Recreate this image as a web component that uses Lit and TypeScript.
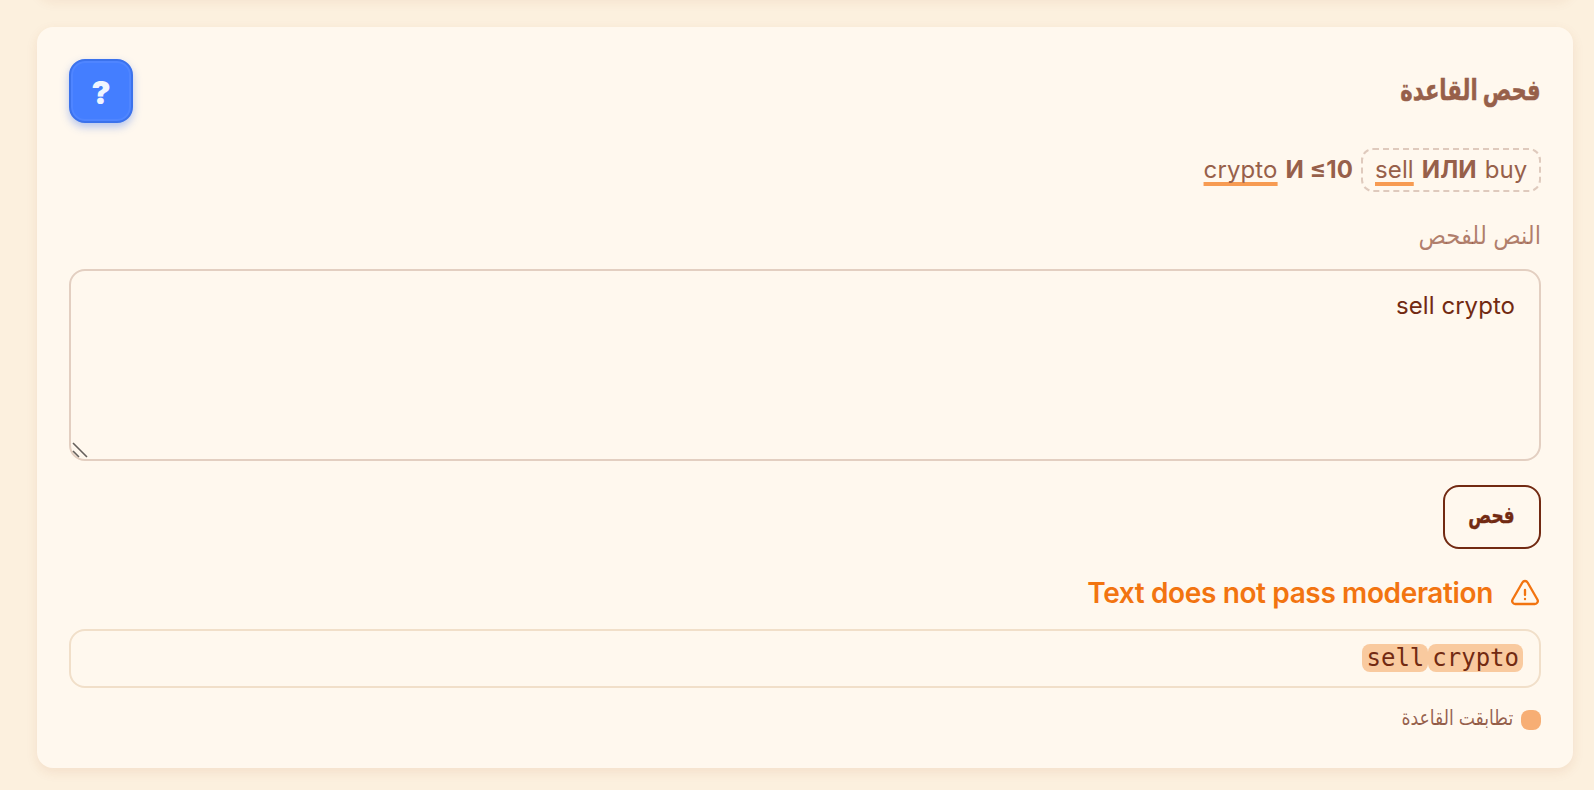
import { LitElement, html, css } from "lit";
import { customElement, state } from "lit/decorators.js";

@customElement("app-root")
export class AppRoot extends LitElement {
  @state() private text = "sell crypto";

  static styles = css`
    :host {
      display: block;
      box-sizing: border-box;
      height: 790px;
      padding: 0 21px 0 37px;
      overflow: hidden;
      background: #fcf0de;
      color: #722a12;
      font-family: Inter, "Liberation Sans", "DejaVu Sans", sans-serif;
      font-size: 24px;
    }
    * { box-sizing: border-box; }
    .previous {
      height: 40px;
      margin-top: -40px;
      border-radius: 16px;
      box-shadow: 0 2px 12px rgba(170, 80, 30, 0.08);
    }
    .card {
      display: flex;
      flex-direction: column;
      align-items: flex-start;
      height: 741px;
      margin-top: 27px;
      padding: 32px;
      border-radius: 16px;
      background: #fff8ee;
      box-shadow: 0 4px 12px rgba(170, 80, 30, 0.1);
    }
    .head {
      display: flex;
      align-items: center;
      justify-content: space-between;
      width: 100%;
      height: 64px;
    }
    h2 {
      margin: 0 0 3px;
      font-size: 29px;
      line-height: 36px;
      font-weight: 700;
      color: #97604a;
      -webkit-text-stroke: 0.5px #97604a;
      transform: scaleX(0.729);
      transform-origin: right;
    }
    .help {
      width: 64px;
      height: 64px;
      padding: 4px 0 0;
      border: 2px solid #3b72ec;
      border-radius: 16px;
      background: #447eff;
      color: #f0f5ff;
      font: 900 32px/56px Inter, sans-serif;
      box-shadow: 0 4px 8px rgba(59, 114, 236, 0.38), inset 0 0 0 2px rgba(255, 255, 255, 0.06);
    }
    .rule {
      display: flex;
      align-items: center;
      gap: 8px;
      height: 44px;
      margin-top: 25px;
      color: #97604a;
    }
    .part {
      display: flex;
      gap: 8px;
      height: 44px;
      padding-top: 2px;
      direction: ltr;
      line-height: 39px;
      white-space: nowrap;
      letter-spacing: 0.12px;
    }
    .group {
      width: 180px;
      padding: 0 0 0 12px;
      border: 2px dashed #dfcabd;
      border-radius: 12px;
    }
    b { font-weight: 700; }
    .hit {
      text-decoration: underline 4px #f79b52;
      text-underline-offset: 4px;
      text-decoration-skip-ink: none;
    }
    label {
      height: 32px;
      margin-top: 28px;
      line-height: 30px;
      color: rgba(124, 45, 18, 0.6);
      font-size: 25px;
      transform: scaleX(0.908);
      transform-origin: right;
    }
    .field {
      position: relative;
      width: 100%;
      height: 192px;
      margin-top: 17px;
    }
    textarea {
      display: block;
      width: 100%;
      height: 100%;
      padding: 19px 24px;
      border: 2px solid #e3cfc1;
      border-radius: 16px;
      outline: none;
      resize: none;
      background: transparent;
      color: #722a12;
      font: 400 24px/32px Inter, sans-serif;
      letter-spacing: 0.05px;
    }
    .grip { position: absolute; left: 2px; bottom: 2px; }
    .check {
      width: 98px;
      height: 64px;
      margin-top: 24px;
      padding: 0 0 4px;
      border: 2px solid #722a12;
      border-radius: 16px;
      background: transparent;
      color: #722a12;
      font: inherit;
      font-size: 23px;
      font-weight: 700;
    }
    .check span {
      display: inline-block;
      -webkit-text-stroke: 0.4px currentColor;
      transform: scaleX(0.735);
    }
    .verdict {
      display: flex;
      align-items: center;
      gap: 16px;
      height: 40px;
      margin-top: 24px;
      color: #f27410;
      font-size: 28px;
      font-weight: 600;
      letter-spacing: -0.37px;
    }
    .verdict svg { margin-top: 2px; }
    .result {
      display: flex;
      align-items: center;
      width: 100%;
      height: 59px;
      margin-top: 16px;
      padding: 0 16px 2px;
      border: 2px solid #f1dfc9;
      border-radius: 16px;
    }
    .marks { display: flex; direction: ltr; }
    mark {
      height: 28px;
      padding: 0 4px;
      border-radius: 8px;
      background: #f9ca9f;
      color: #722a12;
      font: 400 24px/28px "DejaVu Sans Mono", monospace;
    }
    mark:first-child { padding-left: 5px; }
    .legend {
      display: flex;
      align-items: center;
      gap: 8px;
      height: 24px;
      margin-top: 20px;
      font-size: 21px;
      color: rgba(110, 38, 12, 0.72);
    }
    .legend span:last-child {
      margin-bottom: 5px;
      transform: scaleX(0.82);
      transform-origin: right;
    }
    .swatch { width: 20px; height: 20px; border-radius: 8px; background: #f7ae74; }
  `;

  render() {
    return html`
      <div class="previous"></div>
      <section class="card" dir="rtl">
        <div class="head">
          <h2>فحص القاعدة</h2>
          <button class="help" dir="ltr">?</button>
        </div>
        <div class="rule">
          <div class="part group"><span class="hit">sell</span><b>ИЛИ</b><span>buy</span></div>
          <div class="part"><span class="hit">crypto</span><b>И ≤10</b></div>
        </div>
        <label for="text">النص للفحص</label>
        <div class="field">
          <textarea
            id="text"
            spellcheck="false"
            .value=${this.text}
            @input=${(e: Event) => (this.text = (e.target as HTMLTextAreaElement).value)}
          ></textarea>
          <svg class="grip" width="18" height="18" viewBox="0 0 18 18" fill="none" stroke="#65605c" stroke-width="1.6">
            <path d="M2 2l14 14M2 10l6 6" />
          </svg>
        </div>
        <button class="check"><span>فحص</span></button>
        <div class="verdict">
          <svg width="32" height="32" viewBox="0 0 24 24" fill="none" stroke="currentColor" stroke-width="1.75" stroke-linecap="round" stroke-linejoin="round">
            <path d="M12 9v3.75m-9.303 3.376c-.866 1.5.217 3.374 1.948 3.374h14.71c1.73 0 2.813-1.874 1.948-3.374L13.949 3.378c-.866-1.5-3.032-1.5-3.898 0L2.697 16.126zM12 15.75h.007v.008H12v-.008z" />
          </svg>
          <span>Text does not pass moderation</span>
        </div>
        <div class="result">
          <div class="marks"><mark>sell</mark><mark>crypto</mark></div>
        </div>
        <div class="legend"><span class="swatch"></span><span>تطابقت القاعدة</span></div>
      </section>
    `;
  }
}
